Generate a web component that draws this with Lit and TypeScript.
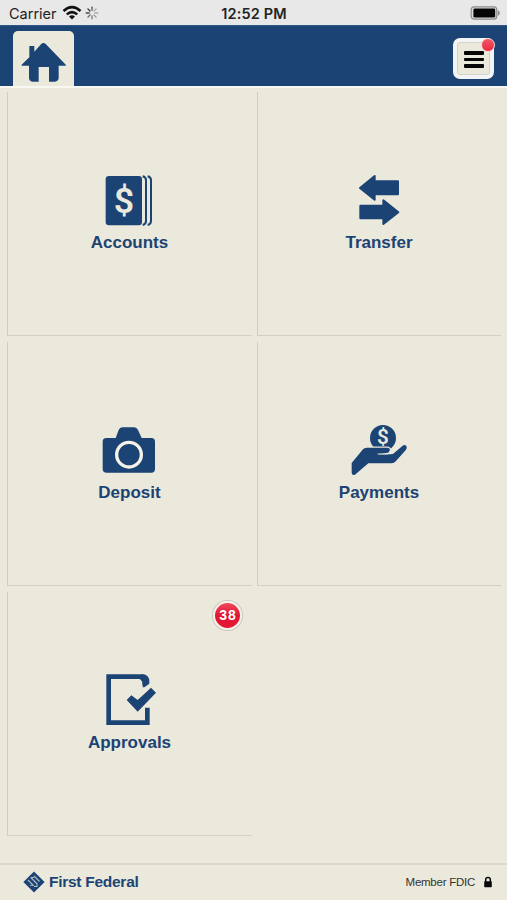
import { LitElement, html, svg, css } from "lit";
import { customElement, property } from "lit/decorators.js";

const dollar = (x: number, y: number, size: number, fill: string) =>
  svg`<text x=${x} y=${y} font-size=${size} fill=${fill} text-anchor="middle"
    style="font-family:Roboto,sans-serif;font-weight:600">$</text>`;

const PAPER = "#ebe8dc";

const icons: Record<string, unknown> = {
  accounts: svg`
    <rect x="77" y="33" width="109" height="148" rx="10"/>
    ${dollar(132, 144, 107, PAPER)}
    <path d="M188 34Q198 36 198 46V168Q198 178 188 180" fill="none" stroke="currentColor" stroke-width="6"/>
    <path d="M203 34Q213 36 213 46V168Q213 178 203 180" fill="none" stroke="currentColor" stroke-width="6"/>`,
  transfer: svg`
    <g stroke="currentColor" stroke-width="6" stroke-linejoin="round">
      <path d="M90 69L134 33V49H204V88H134V104Z"/>
      <path d="M205 142L160 106V122H91V160H160V177Z"/>
    </g>`,
  deposit: svg`
    <path d="M79 69H107L116 45Q119 37 127 37H163Q170 37 174 45L185 69H214Q225 69 225 80V162Q225 173 214 173H80Q68 173 68 162V80Q68 69 79 69Z"/>
    <circle cx="147" cy="119" r="37" fill="none" stroke="#f5f2e8" stroke-width="10"/>`,
  payments: svg`
    <circle cx="159" cy="69" r="39"/>
    ${dollar(159, 86, 62, PAPER)}
    <path d="M65 144L99 103Q103 98 110 98H173Q180 99 180 106Q179 113 171 114L145 118H183Q190 118 195 112L218 92Q224 88 229 93Q232 98 228 104L198 138Q193 145 184 145H115L74 180Q65 181 65 173Z"
      stroke=${PAPER} stroke-width="7" paint-order="stroke"/>
    <path d="M143 117H174Q181 113 181 105" fill="none" stroke=${PAPER} stroke-width="3"/>`,
  approvals: svg`
    <path d="M194 59V48L183 35H86V173H202V128" fill="none" stroke="currentColor" stroke-width="14"/>
    <path d="M183 28H192Q208 32 208 49V56L193 67H188V43Z"/>
    <path d="M140 105L154 91L173 105L213 68L228 83L173 140Z"/>`,
};

@customElement("menu-tile")
export class MenuTile extends LitElement {
  @property() icon = "";
  @property() label = "";
  @property() count = "";

  static styles = css`
    :host {
      position: relative;
      box-sizing: border-box;
      display: flex;
      flex-direction: column;
      align-items: center;
      padding-top: 73px;
      border-left: 1px solid #d0cec3;
      border-bottom: 1px solid #d3d1c6;
      color: #1b4373;
    }
    svg { width: 100px; height: 65px; fill: currentColor; flex: none; }
    .label {
      font: bold 17px/20px "Liberation Sans", Arial, sans-serif;
      margin: 3px 1px 0 0;
    }
    .count {
      position: absolute;
      top: 9px;
      right: 10px;
      width: 25px;
      height: 25px;
      border-radius: 50%;
      border: 2px solid #f7f1e8;
      box-shadow: 0 0 0 1px #c9c5bb;
      background: linear-gradient(#f1485b, #e01632 50%, #e51835);
      color: #fff;
      font: bold 14px/25px "Liberation Sans", Arial, sans-serif;
      letter-spacing: 0.9px;
      text-indent: 1px;
      text-align: center;
    }
  `;

  render() {
    return html`
      <svg viewBox="0 0 300 195">${icons[this.icon]}</svg>
      <div class="label">${this.label}</div>
      ${this.count ? html`<div class="count">${this.count}</div>` : ""}
    `;
  }
}

@customElement("app-root")
export class AppRoot extends LitElement {
  static styles = css`
    :host {
      display: flex;
      flex-direction: column;
      height: 900px;
      background: #ebe8dc;
      font-family: "Liberation Sans", Arial, sans-serif;
      overflow: hidden;
    }
    .status {
      display: grid;
      grid-template-columns: 1fr auto 1fr;
      align-items: center;
      height: 25px;
      box-sizing: border-box;
      padding: 2px 6px 0 9px;
      background: #e8e8e8;
      color: #222;
      font: 14.5px/20px Inter, sans-serif;
    }
    .carrier { display: flex; align-items: center; }
    .wifi { width: 20px; height: 16px; margin-left: 5px; margin-top: -2px; }
    .spin { width: 14px; height: 14px; margin-left: 3px; margin-top: -1px; }
    .time { font-weight: 600; font-size: 14.5px; letter-spacing: 0.15px; margin-right: 2px; }
    .battery { width: 31px; height: 16px; justify-self: end; margin-top: -2px; }
    header {
      display: flex;
      justify-content: space-between;
      align-items: flex-end;
      height: 61px;
      box-sizing: border-box;
      padding: 0 13px;
      background: #1b4475;
      border-top: 1px solid #2f5784;
    }
    .home {
      width: 61px;
      height: 55px;
      border-radius: 5px 5px 0 0;
      background: #ebe8dc;
    }
    .home svg { display: block; width: 61px; height: 55px; }
    .menu {
      position: relative;
      width: 41px;
      height: 41px;
      margin-bottom: 7px;
      box-sizing: border-box;
      border-radius: 7px;
      border: 4px solid #f3f4f5;
      background: #ebe8dc;
      box-shadow: inset 0 0 0 1px #d4d2cb;
      display: flex;
      flex-direction: column;
      justify-content: center;
      align-items: center;
      gap: 3px;
      padding-top: 2px;
    }
    .bar { width: 20px; height: 3.4px; border-radius: 1px; background: #080808; }
    .dot {
      position: absolute;
      top: -4px;
      right: -5px;
      width: 12px;
      height: 12px;
      border-radius: 50%;
      border: 1px solid #f5d5d8;
      background: linear-gradient(#f45769, #e9283f);
    }
    .edge { height: 2px; background: #f8f7f2; }
    .tiles {
      display: grid;
      grid-template-columns: 245px 244px;
      grid-auto-rows: 244px;
      gap: 6px 5px;
      padding: 4px 0 0 7px;
      flex: 1;
      align-content: start;
    }
    footer {
      display: flex;
      align-items: center;
      height: 37px;
      box-sizing: border-box;
      padding: 0 14px 2px 23px;
      border-top: 2px solid #dad7cc;
    }
    .logo { width: 22px; height: 22px; }
    .brand { margin-left: 4px; color: #1b4475; font-weight: bold; font-size: 15.5px; letter-spacing: -0.27px; }
    .fdic { margin-left: auto; font-size: 11.5px; letter-spacing: -0.25px; color: #35342f; }
    .lock { width: 10px; height: 12px; margin-left: 8px; }
  `;

  render() {
    return html`
      <div class="status">
        <div class="carrier">
          Carrier
          <svg class="wifi" viewBox="0 0 20 16">
            <g fill="none" stroke="#111" stroke-width="2.6">
              <path d="M1.5 6Q10-1.8 18.5 6"/>
              <path d="M4.8 9.4Q10 4.8 15.2 9.4"/>
            </g>
            <path d="M7 11.4Q10 9 13 11.4L10 14.5Z" fill="#111"/>
          </svg>
          <svg class="spin" viewBox="0 0 14 14" stroke-width="1.3" stroke-linecap="round">
            ${[0, 45, 90, 135, 180, 225, 270, 315].map(
              (a, i) => svg`<path d="M7 1.2V4.2" transform=${`rotate(${a} 7 7)`}
                stroke=${["#555", "#aaa", "#aaa", "#999", "#777", "#666", "#444", "#333"][i]}/>`
            )}
          </svg>
        </div>
        <div class="time">12:52 PM</div>
        <svg class="battery" viewBox="0 0 31 16">
          <rect x="1.2" y="1.8" width="25.6" height="12.4" rx="3" fill="#ddd" stroke="#8b8b8b" stroke-width="1.2"/>
          <rect x="3.4" y="3.6" width="21.8" height="9" rx="1.4" fill="#050505"/>
          <path d="M27.8 5Q32 8 27.8 11Z" fill="#8b8b8b"/>
        </svg>
      </div>
      <header>
        <div class="home">
          <svg viewBox="39 93 183 165" fill="#1b4475">
            <path d="M64 195L88 172V138H103V155L123 133Q130 125 138 133L198 195Q199 197 195 197H176V235Q175 244 165 245H147V201H116V245H97Q88 244 87 235V197H66Z"/>
          </svg>
        </div>
        <div class="menu">
          <div class="bar"></div>
          <div class="bar"></div>
          <div class="bar"></div>
          <div class="dot"></div>
        </div>
      </header>
      <div class="edge"></div>
      <div class="tiles">
        <menu-tile icon="accounts" label="Accounts"></menu-tile>
        <menu-tile icon="transfer" label="Transfer"></menu-tile>
        <menu-tile icon="deposit" label="Deposit"></menu-tile>
        <menu-tile icon="payments" label="Payments"></menu-tile>
        <menu-tile icon="approvals" label="Approvals" count="38"></menu-tile>
      </div>
      <footer>
        <svg class="logo" viewBox="0 0 22 22">
          <path d="M11 .4L21.6 11L11 21.6L.4 11Z" fill="#1b4475"/>
          <path d="M5 9L10.2 14.2L7.2 14.2M7.8 6.5L14 12.8V15.5H11M11 5L16.5 10.5M7.8 6.5H11" fill="none" stroke="#b7bec4" stroke-width="1.1"/>
        </svg>
        <div class="brand">First Federal</div>
        <div class="fdic">Member FDIC</div>
        <svg class="lock" viewBox="0 0 10 12">
          <path d="M2.7 6V3.6Q2.7 1.4 5 1.4T7.3 3.6V6" fill="none" stroke="#080808" stroke-width="1.5"/>
          <rect x="1.2" y="5.3" width="7.6" height="6" rx=".8" fill="#080808"/>
        </svg>
      </footer>
    `;
  }
}
